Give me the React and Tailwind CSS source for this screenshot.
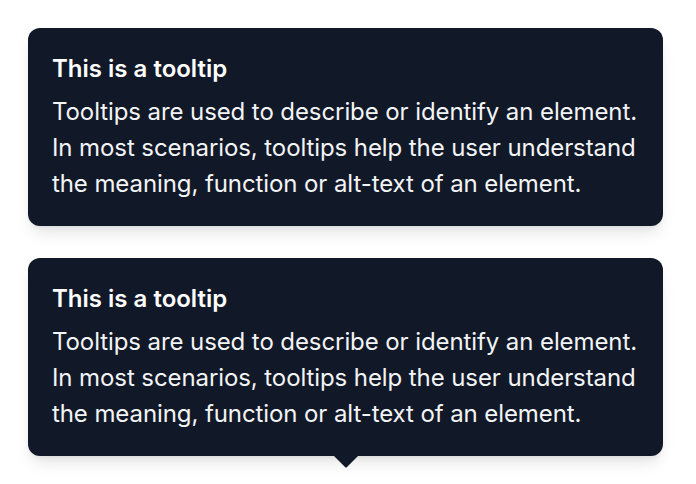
import React from "react";

function Tooltip({ arrow }) {
  return (
    <div className="relative w-[635px] rounded-[12px] bg-[#111827] p-[24px] shadow-[0_10px_15px_-3px_rgba(0,0,0,0.1),0_4px_6px_-4px_rgba(0,0,0,0.1)]">
      <div className="text-[24px] font-semibold leading-[33px] text-white">This is a tooltip</div>
      <div className="mt-[9px] text-[24px] leading-[36px] tracking-[-0.09px] text-[#f3f4f6] whitespace-nowrap">
        <div>Tooltips are used to describe or identify an element.</div>
        <div>In most scenarios, tooltips help the user understand</div>
        <div>the meaning, function or alt-text of an element.</div>
      </div>
      {arrow && (
        <svg
          className="absolute left-1/2 top-full -translate-x-1/2"
          width="24"
          height="12"
          viewBox="0 0 24 12"
        >
          <path d="M0 0 L24 0 L13 11 Q12 12 11 11 Z" fill="#111827" />
        </svg>
      )}
    </div>
  );
}

export default function App() {
  return (
    <div
      className="min-h-[484px] w-[696px] bg-white p-[28px] flex flex-col gap-[32px]"
      style={{ fontFamily: "Inter, 'Noto Sans', sans-serif" }}
    >
      <Tooltip />
      <Tooltip arrow />
    </div>
  );
}
